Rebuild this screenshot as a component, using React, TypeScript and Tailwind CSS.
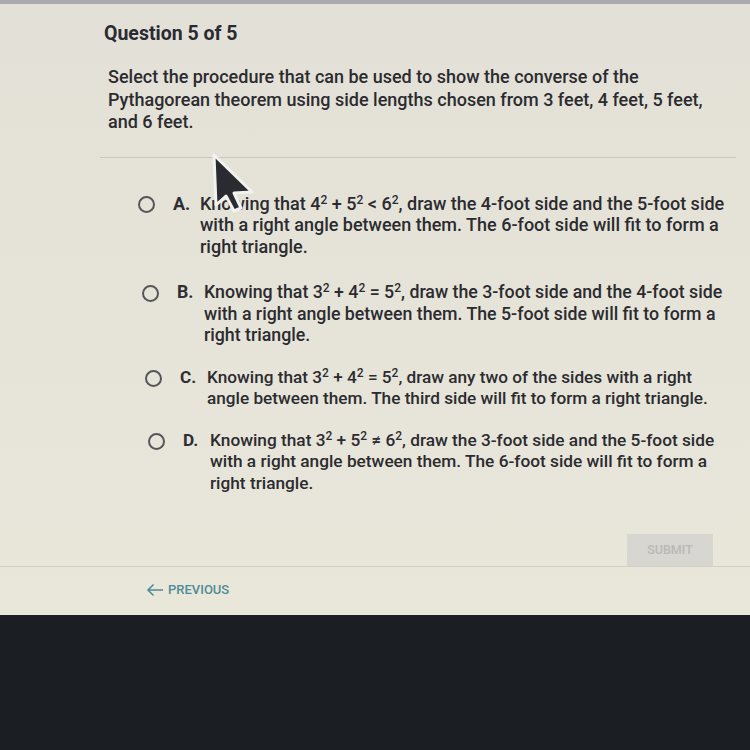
const options = [
  {
    letter: 'A.',
    indent: 'ml-[138px] text-[18px]',
    gap: '',
    lines: [
      <>
        Knowing that 4<sup>2</sup> + 5<sup>2</sup> &lt; 6<sup>2</sup>, draw the 4-foot side and the 5-foot side
      </>,
      <>with a right angle between them. The 6-foot side will fit to form a</>,
      <>right triangle.</>,
    ],
  },
  {
    letter: 'B.',
    indent: 'ml-[142px] text-[17.75px]',
    gap: 'mt-[25px]',
    lines: [
      <>
        Knowing that 3<sup>2</sup> + 4<sup>2</sup> = 5<sup>2</sup>, draw the 3-foot side and the 4-foot side
      </>,
      <>with a right angle between them. The 5-foot side will fit to form a</>,
      <>right triangle.</>,
    ],
  },
  {
    letter: 'C.',
    indent: 'ml-[145px] text-[17.2px]',
    gap: 'mt-[20px]',
    lines: [
      <>
        Knowing that 3<sup>2</sup> + 4<sup>2</sup> = 5<sup>2</sup>, draw any two of the sides with a right
      </>,
      <>angle between them. The third side will fit to form a right triangle.</>,
    ],
  },
  {
    letter: 'D.',
    indent: 'ml-[148px] text-[17.25px]',
    gap: 'mt-[20px]',
    lines: [
      <>
        Knowing that 3<sup>2</sup> + 5<sup>2</sup> ≠ 6<sup>2</sup>, draw the 3-foot side and the 5-foot side
      </>,
      <>with a right angle between them. The 6-foot side will fit to form a</>,
      <>right triangle.</>,
    ],
  },
];

interface OptionProps {
  letter: string;
  indent: string;
  gap: string;
  lines: React.ReactNode[];
}

function Option({ letter, indent, gap, lines }: OptionProps) {
  return (
    <div className={`flex items-start ${indent} ${gap}`}>
      <span className="mt-[3px] w-[17px] h-[17px] shrink-0 rounded-full border-2 border-[#56565a]" />
      <span className="ml-[18px] w-[27px] shrink-0 font-bold text-[#2e2e34]">{letter}</span>
      <div className="whitespace-nowrap [&_sup]:text-[12px]">
        {lines.map((l, i) => (
          <div key={i}>{l}</div>
        ))}
      </div>
    </div>
  );
}

export default function App() {
  return (
    <div
      className="w-[750px] h-[750px] bg-[#1b1e23] flex flex-col overflow-hidden"
      style={{ fontFamily: 'Roboto, "Liberation Sans", sans-serif' }}
    >
      <div className="relative h-[615px] bg-gradient-to-b from-[#e3e1d7] to-[#e9e7da] border-t-[4px] border-[#a9a9b0] flex flex-col text-[#2b2b30]">
        <h1 className="pl-[104px] pt-[18px] text-[19.5px] leading-[24px] font-bold text-[#2a2a32]">
          Question 5 of 5
        </h1>
        <div className="pl-[108px] pt-[20px] text-[18px] leading-[22.5px] font-medium whitespace-nowrap">
          <div>Select the procedure that can be used to show the converse of the</div>
          <div>Pythagorean theorem using side lengths chosen from 3 feet, 4 feet, 5 feet,</div>
          <div>and 6 feet.</div>
        </div>
        <div className="mt-[23px] ml-[100px] mr-[14px] border-t border-[#c9c7be]" />

        <div className="pt-[35px] leading-[21.5px] font-medium flex flex-col">
          {options.map((o) => (
            <Option key={o.letter} {...o} />
          ))}
        </div>

        <div className="mt-auto">
          <div className="flex justify-end pr-[37px]">
            <div className="w-[86px] h-[32px] bg-[#d7d6d1] flex items-center justify-center text-[12.5px] font-medium text-[#b9b9b7]">
              SUBMIT
            </div>
          </div>
          <div className="border-t border-[#d2d0c6]" />
          <div className="flex items-center pl-[146px] pt-[15px] pb-[18px] text-[13px] leading-[15px] font-medium text-[#4f8c98]">
            <svg width="18" height="14" viewBox="0 0 18 14" fill="none" stroke="currentColor" strokeWidth="1.6">
              <path d="M17 7H2M7.5 1.5L2 7l5.5 5.5" />
            </svg>
            <span className="ml-[4px]">PREVIOUS</span>
          </div>
        </div>

        <svg className="absolute left-[210px] top-[147px]" width="48" height="64" viewBox="0 0 48 64">
          <path
            d="M4 4 L6 54 L16 45 L24 60 L31 57 L24 42 L42 41 Z"
            fill="#2a2b30"
            stroke="#f2f2f0"
            strokeWidth="3"
            strokeLinejoin="round"
          />
        </svg>
      </div>
    </div>
  );
}
